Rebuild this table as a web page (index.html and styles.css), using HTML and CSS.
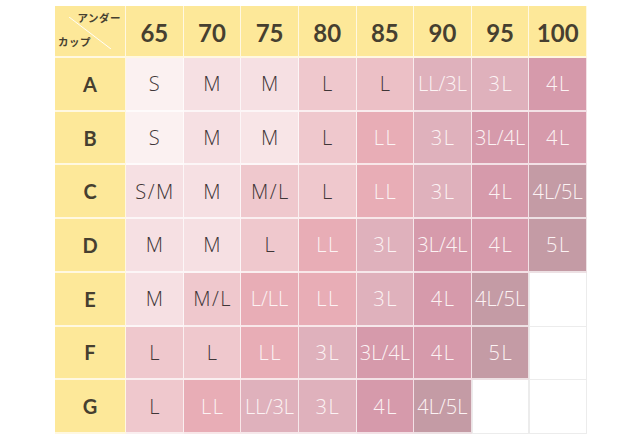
FILE: index.html
```html
<!DOCTYPE html>
<html lang="ja">
<head>
<meta charset="utf-8">
<title>サイズ表</title>
<link rel="stylesheet" href="styles.css">
</head>
<body>
<div class="page">
  <div class="chart">
    <div class="cell head corner">
      <span class="corner-top">アンダー</span>
      <span class="corner-bottom">カップ</span>
    </div>
    <div class="cell head num">65</div>
    <div class="cell head num">70</div>
    <div class="cell head num">75</div>
    <div class="cell head num">80</div>
    <div class="cell head num">85</div>
    <div class="cell head num">90</div>
    <div class="cell head num">95</div>
    <div class="cell head num">100</div>

    <div class="cell head cup">A</div>
    <div class="cell t0">S</div>
    <div class="cell t1">M</div>
    <div class="cell t1">M</div>
    <div class="cell t2">L</div>
    <div class="cell t2b">L</div>
    <div class="cell t4 tight">LL/3L</div>
    <div class="cell t4">3L</div>
    <div class="cell t5">4L</div>

    <div class="cell head cup">B</div>
    <div class="cell t0">S</div>
    <div class="cell t1">M</div>
    <div class="cell t1a">M</div>
    <div class="cell t2">L</div>
    <div class="cell t3">LL</div>
    <div class="cell t4">3L</div>
    <div class="cell t5 tight">3L/4L</div>
    <div class="cell t5">4L</div>

    <div class="cell head cup">C</div>
    <div class="cell t1">S/M</div>
    <div class="cell t1">M</div>
    <div class="cell t2">M/L</div>
    <div class="cell t2">L</div>
    <div class="cell t3">LL</div>
    <div class="cell t4">3L</div>
    <div class="cell t5">4L</div>
    <div class="cell t6 tight">4L/5L</div>

    <div class="cell head cup">D</div>
    <div class="cell t1">M</div>
    <div class="cell t1">M</div>
    <div class="cell t2">L</div>
    <div class="cell t3">LL</div>
    <div class="cell t4">3L</div>
    <div class="cell t5 tight">3L/4L</div>
    <div class="cell t5">4L</div>
    <div class="cell t6">5L</div>

    <div class="cell head cup">E</div>
    <div class="cell t1">M</div>
    <div class="cell t2">M/L</div>
    <div class="cell t3 tight">L/LL</div>
    <div class="cell t3">LL</div>
    <div class="cell t4">3L</div>
    <div class="cell t5">4L</div>
    <div class="cell t6 tight">4L/5L</div>
    <div class="cell empty"></div>

    <div class="cell head cup">F</div>
    <div class="cell t2">L</div>
    <div class="cell t2">L</div>
    <div class="cell t3">LL</div>
    <div class="cell t4">3L</div>
    <div class="cell t5 tight">3L/4L</div>
    <div class="cell t5">4L</div>
    <div class="cell t6">5L</div>
    <div class="cell empty"></div>

    <div class="cell head cup">G</div>
    <div class="cell t2">L</div>
    <div class="cell t3">LL</div>
    <div class="cell t4 tight">LL/3L</div>
    <div class="cell t4">3L</div>
    <div class="cell t5">4L</div>
    <div class="cell t6 tight">4L/5L</div>
    <div class="cell empty"></div>
    <div class="cell empty"></div>
  </div>
</div>
</body>
</html>
```

FILE: styles.css
```css
html, body {
  margin: 0;
  padding: 0;
  background: #ffffff;
}

.page {
  padding: 6px 0 0 55px;
}

.chart {
  display: grid;
  grid-template-columns: 71px repeat(8, 1fr);
  grid-template-rows: 52px repeat(7, 1fr);
  width: 532px;
  height: 428px;
  font-family: "Open Sans", "Noto Sans CJK JP", sans-serif;
}

.cell {
  display: flex;
  align-items: center;
  justify-content: center;
  border-right: 1px solid rgba(255, 255, 255, 0.7);
  border-bottom: 2px solid rgba(255, 255, 255, 0.7);
  font-size: 20px;
  font-weight: 300;
  letter-spacing: 1.5px;
  padding-left: 1.5px;
  color: #3f3637;
  white-space: nowrap;
  overflow: hidden;
}

.head {
  background: #fde899;
  color: #463f30;
  font-family: Lato, sans-serif;
  font-weight: 700;
  letter-spacing: 0;
  padding-left: 0;
}

.num {
  font-size: 24px;
  padding-top: 2px;
}

.cup {
  font-size: 20px;
}

.corner {
  flex-direction: column;
  align-items: stretch;
  justify-content: space-between;
  padding: 5px 4px 8px 3px;
  font-family: "Noto Sans CJK JP", sans-serif;
  font-size: 10.5px;
  font-weight: 700;
  line-height: 13px;
  color: #463f30;
  background-color: #fde899;
  background-image: linear-gradient(to top right, rgba(255,255,255,0) calc(50% - 0.8px), rgba(255,255,255,0.95) 50%, rgba(255,255,255,0) calc(50% + 0.8px));
  background-size: 42px 32px;
  background-position: 14px 11px;
  background-repeat: no-repeat;
}

.corner-top {
  align-self: flex-end;
  letter-spacing: 0.5px;
}

.corner-bottom {
  align-self: flex-start;
  letter-spacing: 0.5px;
}

.tight {
  letter-spacing: 0;
  padding-left: 0;
}

.t0 { background: #fbf1f1; }
.t1 { background: #f6e0e3; }
.t1a { background: #f8e5e7; }
.t2 { background: #efc8cd; }
.t2b { background: #ecc0c6; }
.t3 { background: #e8adb6; color: #fcf3f4; }
.t4 { background: #dfb1bc; color: #fcf3f4; }
.t5 { background: #d69aab; color: #fcf3f4; }
.t6 { background: #c49ba5; color: #fcf3f4; }

.empty {
  background: #ffffff;
  border-right-color: #ececec;
  border-bottom: 1px solid #ececec;
  border-left: 1px solid #ececec;
}
```
